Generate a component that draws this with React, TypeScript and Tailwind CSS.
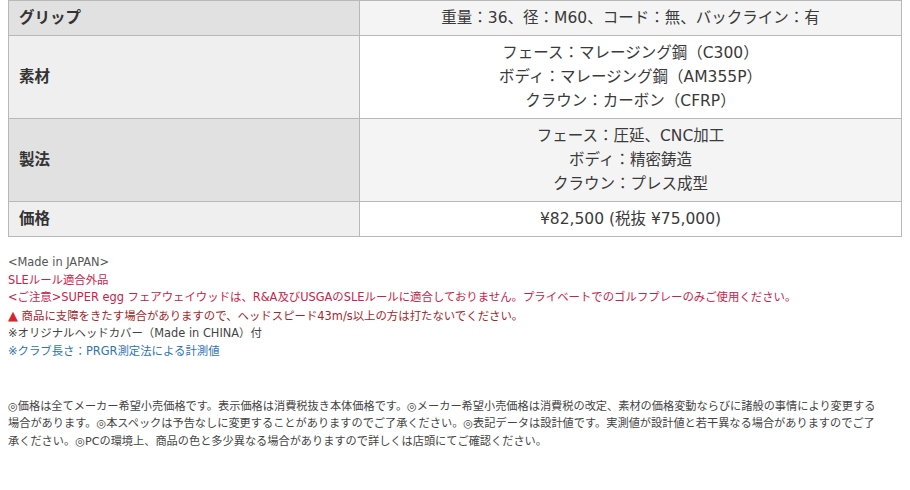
const font = {
  fontFamily: '"DejaVu Sans", "Noto Sans CJK JP", sans-serif',
};

type Row = { label: string; lines: string[]; shade: boolean };

const rows: Row[] = [
  { label: "グリップ", lines: ["重量：36、径：M60、コード：無、バックライン：有"], shade: true },
  {
    label: "素材",
    lines: ["フェース：マレージング鋼（C300）", "ボディ：マレージング鋼（AM355P）", "クラウン：カーボン（CFRP）"],
    shade: false,
  },
  {
    label: "製法",
    lines: ["フェース：圧延、CNC加工", "ボディ：精密鋳造", "クラウン：プレス成型"],
    shade: true,
  },
  { label: "価格", lines: ["¥82,500 (税抜 ¥75,000)"], shade: false },
];

export default function App() {
  return (
    <div className="w-[910px] h-[490px] bg-white overflow-hidden px-2" style={font}>
      <table className="w-full border-collapse border border-[#b8b8b8]">
        <tbody>
          {rows.map((r) => (
            <tr key={r.label}>
              <th
                className={`w-[351px] border border-[#b8b8b8] px-[10px] py-[5px] text-left align-middle text-[15.5px] leading-[24px] font-bold text-[#333] ${
                  r.shade ? "bg-[#e1e1e1]" : "bg-[#efefef]"
                }`}
              >
                {r.label}
              </th>
              <td
                className={`border border-[#b8b8b8] px-[10px] py-[5px] text-center text-[15.5px] leading-[24px] text-[#3a3a3a] ${
                  r.shade ? "bg-[#f4f4f4]" : "bg-white"
                }`}
              >
                {r.lines.map((l) => (
                  <div key={l}>{l}</div>
                ))}
              </td>
            </tr>
          ))}
        </tbody>
      </table>

      <div className="mt-[17px] text-[11.4px] leading-[17.6px]">
        <p className="text-[#555]">&lt;Made in JAPAN&gt;</p>
        <p className="text-[#c8234a]">SLEルール適合外品</p>
        <p className="text-[#c8234a]">
          &lt;ご注意&gt;SUPER egg フェアウェイウッドは、R&amp;A及びUSGAのSLEルールに適合しておりません。プライベートでのゴルフプレーのみご使用ください。
        </p>
        <p className="text-[#a1282c]">
          <span className="text-[#d8252b] text-[13px]">▲</span> 商品に支障をきたす場合がありますので、ヘッドスピード43m/s以上の方は打たないでください。
        </p>
        <p className="text-[#444]">※オリジナルヘッドカバー（Made in CHINA）付</p>
        <p className="text-[#2f74b5]">※クラブ長さ：PRGR測定法による計測値</p>
      </div>

      <p className="mt-[37px] w-[872px] text-[11.2px] leading-[17.6px] text-[#444]">
        ◎価格は全てメーカー希望小売価格です。表示価格は消費税抜き本体価格です。◎メーカー希望小売価格は消費税の改定、素材の価格変動ならびに諸般の事情により変更する場合があります。◎本スペックは予告なしに変更することがありますのでご了承ください。◎表記データは設計値です。実測値が設計値と若干異なる場合がありますのでご了承ください。◎PCの環境上、商品の色と多少異なる場合がありますので詳しくは店頭にてご確認ください。
      </p>
    </div>
  );
}
